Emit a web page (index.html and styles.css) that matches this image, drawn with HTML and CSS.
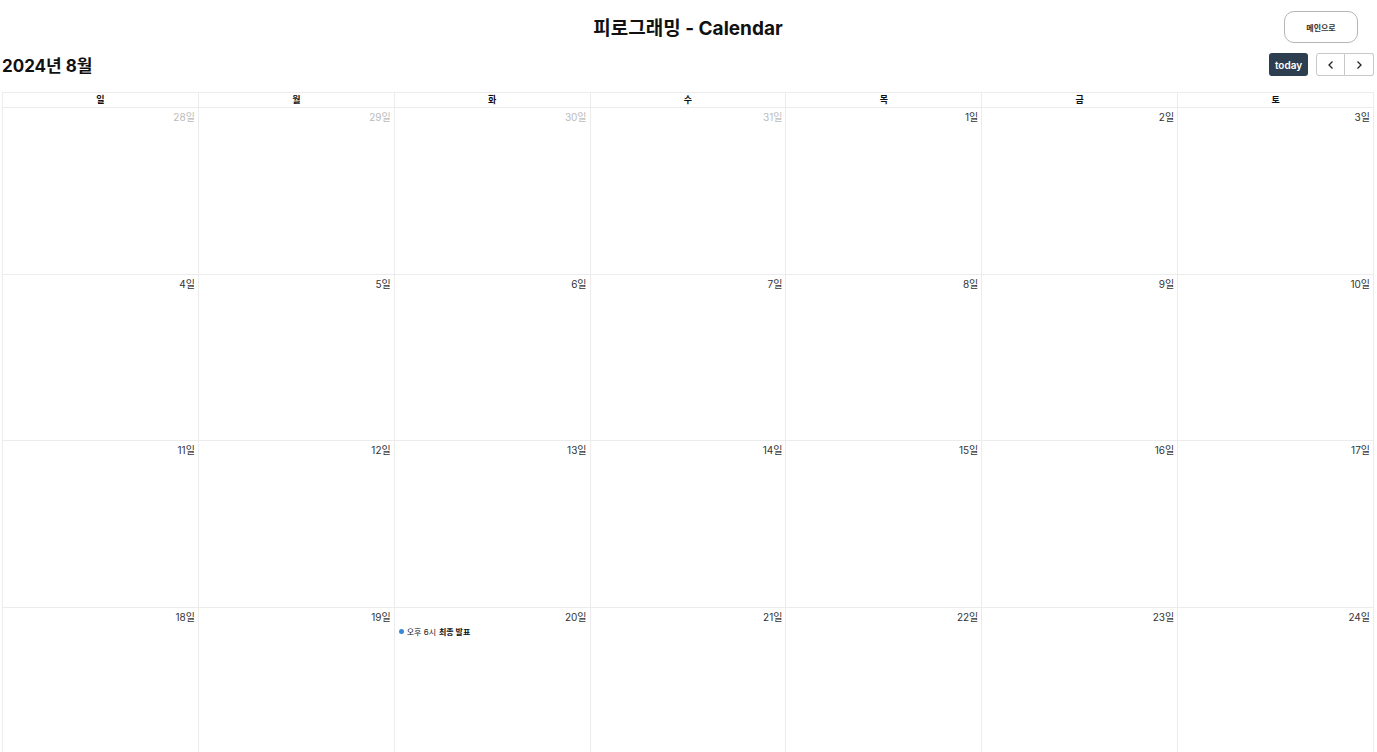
FILE: index.html
```html
<!DOCTYPE html>
<html lang="ko">
<head>
<meta charset="utf-8">
<title>피로그래밍 - Calendar</title>
<link rel="stylesheet" href="styles.css">
</head>
<body>
<div class="page">
  <header class="top">
    <div></div>
    <h1 class="title">피로그래밍 - Calendar</h1>
    <div class="top-right"><button class="main-btn">메인으로</button></div>
  </header>
  <div class="toolbar">
    <h2 class="month">2024년 8월</h2>
    <div class="nav">
      <button class="today">today</button>
      <div class="group">
        <button class="arrow"><svg width="10" height="10" viewBox="0 0 10 10"><path d="M6.5 1.5 3 5l3.5 3.5" fill="none" stroke="#222" stroke-width="1.3"/></svg></button>
        <button class="arrow"><svg width="10" height="10" viewBox="0 0 10 10"><path d="M3.5 1.5 7 5 3.5 8.5" fill="none" stroke="#222" stroke-width="1.3"/></svg></button>
      </div>
    </div>
  </div>
  <div class="cal">
    <div class="head">
      <div class="hc">일</div><div class="hc">월</div><div class="hc">화</div><div class="hc">수</div><div class="hc">목</div><div class="hc">금</div><div class="hc">토</div>
    </div>
    <div class="body">
      <div class="cell other"><span class="num">28일</span></div>
      <div class="cell other"><span class="num">29일</span></div>
      <div class="cell other"><span class="num">30일</span></div>
      <div class="cell other"><span class="num">31일</span></div>
      <div class="cell"><span class="num">1일</span></div>
      <div class="cell"><span class="num">2일</span></div>
      <div class="cell"><span class="num">3일</span></div>

      <div class="cell"><span class="num">4일</span></div>
      <div class="cell"><span class="num">5일</span></div>
      <div class="cell"><span class="num">6일</span></div>
      <div class="cell"><span class="num">7일</span></div>
      <div class="cell"><span class="num">8일</span></div>
      <div class="cell"><span class="num">9일</span></div>
      <div class="cell"><span class="num">10일</span></div>

      <div class="cell"><span class="num">11일</span></div>
      <div class="cell"><span class="num">12일</span></div>
      <div class="cell"><span class="num">13일</span></div>
      <div class="cell"><span class="num">14일</span></div>
      <div class="cell"><span class="num">15일</span></div>
      <div class="cell"><span class="num">16일</span></div>
      <div class="cell"><span class="num">17일</span></div>

      <div class="cell"><span class="num">18일</span></div>
      <div class="cell"><span class="num">19일</span></div>
      <div class="cell"><span class="num">20일</span>
        <div class="event"><span class="dot"></span><span class="time">오후 6시</span><b class="etitle">최종 발표</b></div>
      </div>
      <div class="cell"><span class="num">21일</span></div>
      <div class="cell"><span class="num">22일</span></div>
      <div class="cell"><span class="num">23일</span></div>
      <div class="cell"><span class="num">24일</span></div>

      <div class="cell"><span class="num">25일</span></div>
      <div class="cell"><span class="num">26일</span></div>
      <div class="cell"><span class="num">27일</span></div>
      <div class="cell"><span class="num">28일</span></div>
      <div class="cell"><span class="num">29일</span></div>
      <div class="cell"><span class="num">30일</span></div>
      <div class="cell"><span class="num">31일</span></div>

      <div class="cell other"><span class="num">1일</span></div>
      <div class="cell other"><span class="num">2일</span></div>
      <div class="cell other"><span class="num">3일</span></div>
      <div class="cell other"><span class="num">4일</span></div>
      <div class="cell other"><span class="num">5일</span></div>
      <div class="cell other"><span class="num">6일</span></div>
      <div class="cell other"><span class="num">7일</span></div>
    </div>
  </div>
</div>
</body>
</html>
```
FILE: styles.css
```css
* { box-sizing: border-box; }
html, body { margin: 0; padding: 0; background: #fff; }
body {
  font-family: Inter, "Noto Sans CJK KR", "Noto Sans", sans-serif;
  color: #111;
}
.page { padding: 0 3px 0 2px; }
.top {
  display: grid;
  grid-template-columns: 1fr auto 1fr;
  align-items: start;
  padding-top: 11px;
  height: 43px;
}
.title {
  margin: 0;
  padding-top: 2px;
  font-size: 19px;
  font-weight: 700;
  color: #111;
  text-align: center;
  line-height: 32px;
}
.top-right { display: flex; justify-content: flex-end; padding-right: 16px; }
.main-btn {
  width: 74px;
  height: 32px;
  border: 1px solid #b5b5b5;
  border-radius: 10px;
  background: #fff;
  font-family: inherit;
  font-size: 8px;
  font-weight: 700;
  color: #333;
  padding: 0;
}
.toolbar {
  display: flex;
  justify-content: space-between;
  align-items: center;
  margin-top: 10px;
  height: 23px;
  margin-bottom: 16px;
}
.month {
  margin: 0;
  font-size: 17px;
  font-weight: 700;
  color: #111;
}
.nav { display: flex; align-items: center; gap: 8px; }
.today {
  height: 23px;
  width: 39px;
  padding: 0;
  border: none;
  border-radius: 3px;
  background: #2c3e50;
  color: #fff;
  font-family: inherit;
  font-size: 10px;
  font-weight: 600;
}
.group { display: flex; }
.arrow {
  width: 29px;
  height: 23px;
  padding: 0;
  background: #fff;
  border: 1px solid #c8c8c8;
  display: flex;
  align-items: center;
  justify-content: center;
}
.arrow:first-child { border-radius: 3px 0 0 3px; }
.arrow:last-child { border-radius: 0 3px 3px 0; border-left: none; }
.cal {
  border-top: 1px solid #ececec;
  border-left: 1px solid #ececec;
}
.head, .body {
  display: grid;
  grid-template-columns: repeat(7, 1fr);
}
.hc {
  height: 15px;
  border-right: 1px solid #ececec;
  border-bottom: 1px solid #ececec;
  text-align: center;
  font-size: 9px;
  font-weight: 700;
  line-height: 14px;
  color: #111;
}
.cell {
  height: 166.67px;
  border-right: 1px solid #ececec;
  border-bottom: 1px solid #ececec;
  padding: 3px 3px;
  display: flex;
  flex-direction: column;
  align-items: stretch;
}
.num {
  align-self: flex-end;
  font-size: 10px;
  color: #333;
  line-height: 13px;
}
.other .num { color: #bbb; }
.event {
  display: flex;
  align-items: center;
  margin-top: 2px;
  padding-left: 1px;
  font-size: 8px;
  line-height: 12px;
  color: #222;
}
.dot {
  width: 5px;
  height: 5px;
  border-radius: 50%;
  background: #3788d8;
  margin: 0 3px 0 0;
}
.time { margin-right: 3px; }
.etitle { font-weight: 700; color: #111; }
```
